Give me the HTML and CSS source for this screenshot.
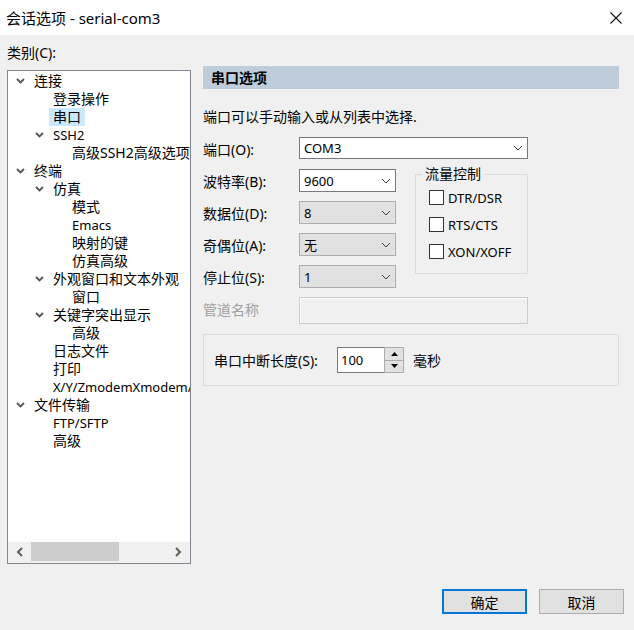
FILE: index.html
```html
<!DOCTYPE html>
<html lang="zh-CN">
  <head>
    <meta charset="UTF-8" />
    <meta name="viewport" content="width=device-width, initial-scale=1.0" />
    <title>会话选项 - serial-com3</title>
    <link rel="stylesheet" href="styles.css">
  </head>
  <body>
    <div class="dialog">
      <div class="titlebar">
        <span class="title">会话选项 - serial-com3</span>
        <svg class="close" width="12" height="12" viewBox="0 0 12 12">
          <path d="M0.5 0.5 L11.5 11.5 M11.5 0.5 L0.5 11.5" stroke="#111" stroke-width="1.1" fill="none" />
        </svg>
      </div>

      <div class="content">
        <div class="left">
          <div class="cat-label">类别(C):</div>
          <div class="tree">
            <div class="tree-list">
              <div class="node lv0"><span class="exp"><svg width="9" height="6" viewBox="0 0 9 6"><polyline points="1,1 4.5,4.5 8,1" /></svg></span><span class="txt">连接</span></div>
              <div class="node lv1"><span class="exp"></span><span class="txt">登录操作</span></div>
              <div class="node lv1"><span class="exp"></span><span class="txt selected">串口</span></div>
              <div class="node lv1"><span class="exp"><svg width="9" height="6" viewBox="0 0 9 6"><polyline points="1,1 4.5,4.5 8,1" /></svg></span><span class="txt en">SSH2</span></div>
              <div class="node lv2"><span class="exp"></span><span class="txt">高级SSH2高级选项</span></div>
              <div class="node lv0"><span class="exp"><svg width="9" height="6" viewBox="0 0 9 6"><polyline points="1,1 4.5,4.5 8,1" /></svg></span><span class="txt">终端</span></div>
              <div class="node lv1"><span class="exp"><svg width="9" height="6" viewBox="0 0 9 6"><polyline points="1,1 4.5,4.5 8,1" /></svg></span><span class="txt">仿真</span></div>
              <div class="node lv2"><span class="exp"></span><span class="txt">模式</span></div>
              <div class="node lv2"><span class="exp"></span><span class="txt en">Emacs</span></div>
              <div class="node lv2"><span class="exp"></span><span class="txt">映射的键</span></div>
              <div class="node lv2"><span class="exp"></span><span class="txt">仿真高级</span></div>
              <div class="node lv1"><span class="exp"><svg width="9" height="6" viewBox="0 0 9 6"><polyline points="1,1 4.5,4.5 8,1" /></svg></span><span class="txt">外观窗口和文本外观</span></div>
              <div class="node lv2"><span class="exp"></span><span class="txt">窗口</span></div>
              <div class="node lv1"><span class="exp"><svg width="9" height="6" viewBox="0 0 9 6"><polyline points="1,1 4.5,4.5 8,1" /></svg></span><span class="txt">关键字突出显示</span></div>
              <div class="node lv2"><span class="exp"></span><span class="txt">高级</span></div>
              <div class="node lv1"><span class="exp"></span><span class="txt">日志文件</span></div>
              <div class="node lv1"><span class="exp"></span><span class="txt">打印</span></div>
              <div class="node lv1"><span class="exp"></span><span class="txt en">X/Y/ZmodemXmodem/Ymodem</span></div>
              <div class="node lv0"><span class="exp"><svg width="9" height="6" viewBox="0 0 9 6"><polyline points="1,1 4.5,4.5 8,1" /></svg></span><span class="txt">文件传输</span></div>
              <div class="node lv1"><span class="exp"></span><span class="txt en">FTP/SFTP</span></div>
              <div class="node lv1"><span class="exp"></span><span class="txt">高级</span></div>
            </div>
            <div class="hscroll">
              <svg class="sarrow" width="8" height="10" viewBox="0 0 8 10"><polyline points="6,1 2,5 6,9" /></svg>
              <div class="track"><div class="thumb"></div></div>
              <svg class="sarrow" width="8" height="10" viewBox="0 0 8 10"><polyline points="2,1 6,5 2,9" /></svg>
            </div>
          </div>
        </div>

        <div class="right">
          <div class="section-head">串口选项</div>
          <p class="hint">端口可以手动输入或从列表中选择.</p>

          <div class="form">
            <label class="lbl">端口(O):</label>
            <div class="combo wide edit">COM3<svg class="arr" width="10" height="6" viewBox="0 0 10 6"><polyline points="1,1 5,5 9,1" /></svg></div>

            <label class="lbl">波特率(B):</label>
            <div class="combo edit">9600<svg class="arr" width="10" height="6" viewBox="0 0 10 6"><polyline points="1,1 5,5 9,1" /></svg></div>

            <fieldset class="flow">
              <legend>流量控制</legend>
              <div class="check"><span class="box"></span>DTR/DSR</div>
              <div class="check"><span class="box"></span>RTS/CTS</div>
              <div class="check"><span class="box"></span>XON/XOFF</div>
            </fieldset>

            <label class="lbl">数据位(D):</label>
            <div class="combo">8<svg class="arr" width="10" height="6" viewBox="0 0 10 6"><polyline points="1,1 5,5 9,1" /></svg></div>

            <label class="lbl">奇偶位(A):</label>
            <div class="combo">无<svg class="arr" width="10" height="6" viewBox="0 0 10 6"><polyline points="1,1 5,5 9,1" /></svg></div>

            <label class="lbl">停止位(S):</label>
            <div class="combo">1<svg class="arr" width="10" height="6" viewBox="0 0 10 6"><polyline points="1,1 5,5 9,1" /></svg></div>

            <label class="lbl disabled">管道名称</label>
            <div class="pipe"></div>
          </div>

          <div class="break-panel">
            <span class="break-lbl">串口中断长度(S):</span>
            <div class="spin">
              <div class="spin-input">100</div>
              <div class="spin-btns">
                <div class="spin-btn"><svg width="7" height="4" viewBox="0 0 7 4"><polygon points="0,4 3.5,0 7,4" /></svg></div>
                <div class="spin-btn"><svg width="7" height="4" viewBox="0 0 7 4"><polygon points="0,0 3.5,4 7,0" /></svg></div>
              </div>
            </div>
            <span class="unit">毫秒</span>
          </div>
        </div>
      </div>

      <div class="footer">
        <button class="btn default">确定</button>
        <button class="btn">取消</button>
      </div>
    </div>
  </body>
</html>
```

FILE: styles.css
```css
* {
  margin: 0;
  padding: 0;
  box-sizing: border-box;
}

body {
  width: 634px;
  height: 630px;
  background-color: #f0f0f0;
  font-family: "Noto Sans", "Noto Sans CJK SC", sans-serif;
  font-size: 14px;
  color: #000;
  overflow: hidden;
}

.dialog {
  height: 630px;
  display: flex;
  flex-direction: column;
}

.titlebar {
  height: 35px;
  background-color: #fff;
  display: flex;
  align-items: center;
  justify-content: space-between;
  padding: 0 12px 0 6px;
  flex-shrink: 0;
}

.title {
  font-size: 15px;
}

.content {
  flex: 1;
  display: flex;
  gap: 12px;
  padding-left: 7px;
}

/* left: category tree */
.left {
  width: 184px;
}

.cat-label {
  height: 18px;
  line-height: 18px;
  margin-top: 9px;
}

.tree {
  margin-top: 8px;
  height: 494px;
  border: 1px solid #828790;
  background-color: #fff;
  display: flex;
  flex-direction: column;
  overflow: hidden;
}

.tree-list {
  flex: 1;
  padding-top: 1px;
  overflow: hidden;
}

.node {
  height: 18px;
  display: flex;
  align-items: center;
  white-space: nowrap;
}

.lv1 {
  padding-left: 19px;
}

.lv2 {
  padding-left: 38px;
}

.exp {
  width: 22px;
  flex-shrink: 0;
  display: flex;
  align-items: center;
  padding-left: 8px;
}

.exp polyline {
  fill: none;
  stroke: #555;
  stroke-width: 1.8;
}

.txt {
  padding: 0 4px;
  line-height: 18px;
}

.txt.en {
  font-size: 13px;
}

.selected {
  background-color: #cce8ff;
}

.hscroll {
  height: 21px;
  background-color: #f0f0f0;
  display: flex;
  align-items: center;
  padding: 0 1px 1px 1px;
}

.sarrow {
  margin: 0 7px;
  flex-shrink: 0;
}

.sarrow polyline {
  fill: none;
  stroke: #606060;
  stroke-width: 2;
}

.track {
  flex: 1;
  height: 20px;
}

.thumb {
  width: 88px;
  height: 19px;
  background-color: #cdcdcd;
}

/* right: options */
.right {
  width: 416px;
  padding-top: 31px;
}

.section-head {
  height: 23px;
  background-color: #bfcddb;
  font-weight: bold;
  padding-left: 8px;
  line-height: 23px;
}

.hint {
  margin-top: 19px;
  line-height: 18px;
}

.form {
  margin-top: 11px;
  display: grid;
  grid-template-columns: 96px 97px 19px 113px;
  grid-auto-rows: 23px;
  row-gap: 9px;
  align-items: center;
}

.lbl {
  grid-column: 1;
}

.disabled {
  color: #a0a0a0;
}

.combo {
  grid-column: 2;
  height: 23px;
  border: 1px solid #adadad;
  background-color: #e1e1e1;
  display: flex;
  align-items: center;
  justify-content: space-between;
  padding: 0 4px;
  font-size: 13px;
}

.combo.edit {
  background-color: #fff;
  border-color: #7a7a7a;
}

.combo.wide {
  grid-column: 2 / 5;
  height: 22px;
  align-self: start;
}

.arr polyline {
  fill: none;
  stroke: #444;
  stroke-width: 1;
}

.pipe {
  grid-column: 2 / 5;
  height: 27px;
  align-self: start;
  border: 1px solid #cccccc;
  box-shadow: inset 1px 1px 0 #fff;
}

.flow {
  grid-column: 4;
  grid-row: 2 / 6;
  align-self: start;
  margin-top: -3px;
  height: 108px;
  border: 1px solid #dcdcdc;
  padding: 8px 0 0 13px;
}

.flow legend {
  margin-left: -7px;
  padding: 0 3px;
  line-height: 16px;
}

.check {
  display: flex;
  align-items: center;
  height: 15px;
  margin-bottom: 12px;
  font-size: 13px;
}

.box {
  width: 15px;
  height: 15px;
  border: 1px solid #333;
  background-color: #fff;
  margin-right: 4px;
}

.break-panel {
  margin-top: 14px;
  height: 52px;
  border: 1px solid #dcdcdc;
  display: flex;
  align-items: center;
  padding-left: 10px;
}

.break-lbl {
  width: 123px;
}

.spin {
  display: flex;
  height: 26px;
}

.spin-input {
  width: 47px;
  border: 1px solid #7a7a7a;
  border-right: none;
  background-color: #fff;
  padding-left: 3px;
  font-size: 13px;
  line-height: 24px;
}

.spin-btns {
  width: 20px;
  border: 1px solid #adadad;
  display: flex;
  flex-direction: column;
  gap: 1px;
  background-color: #adadad;
}

.spin-btn {
  flex: 1;
  background-color: #e1e1e1;
  display: flex;
  align-items: center;
  justify-content: center;
}

.unit {
  margin-left: 9px;
}

/* buttons */
.footer {
  display: flex;
  justify-content: flex-end;
  gap: 12px;
  padding: 0 10px 16px 0;
}

.btn {
  width: 85px;
  height: 25px;
  background-color: #e1e1e1;
  border: 1px solid #adadad;
  font-family: inherit;
  font-size: 14px;
  color: #000;
}

.btn.default {
  border: 2px solid #0078d7;
}
```
